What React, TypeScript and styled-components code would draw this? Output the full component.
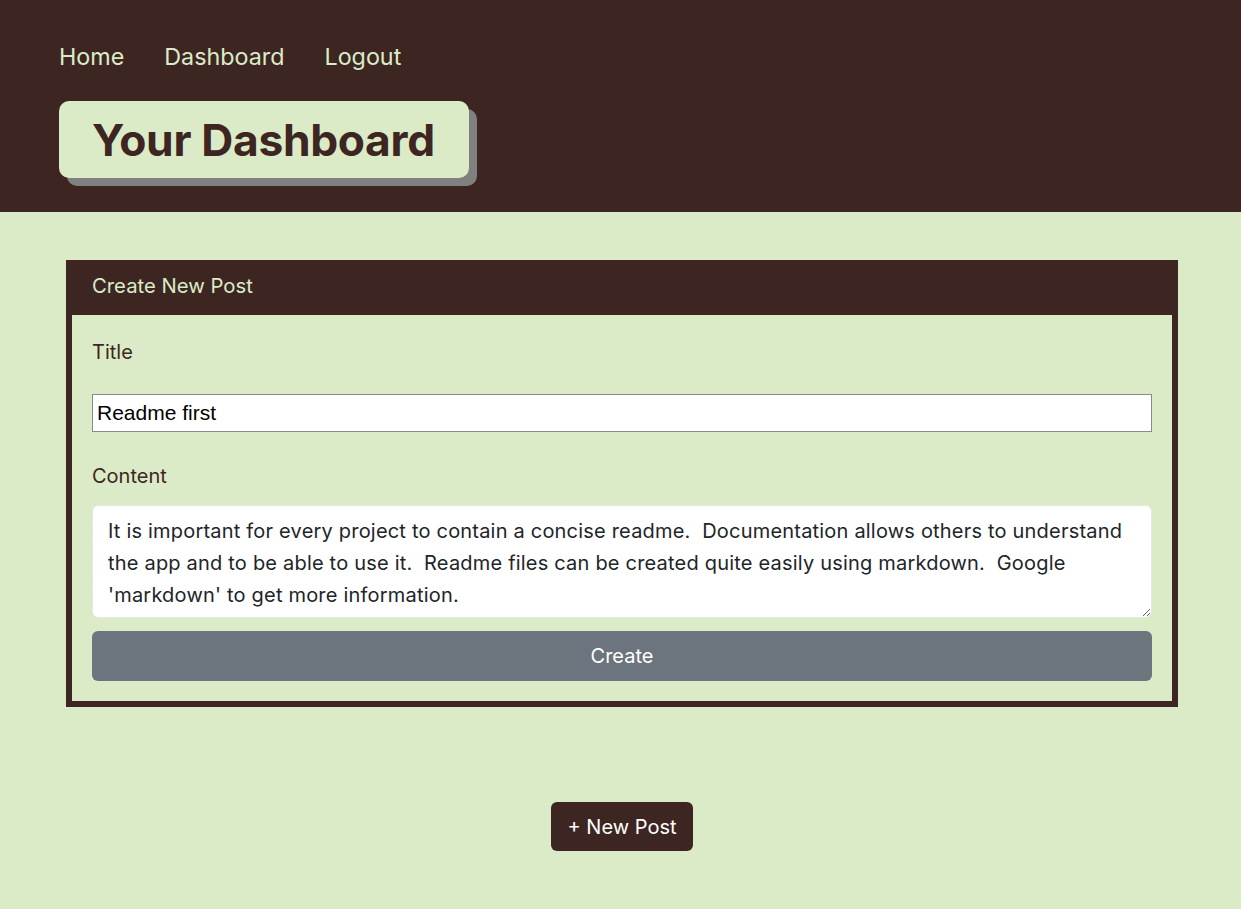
import React from "react";
import styled, { createGlobalStyle } from "styled-components";

const Global = createGlobalStyle`
  html, body { margin: 0; padding: 0; }
  body {
    background: #dcebc7;
    font-family: Inter, "Liberation Sans", sans-serif;
  }
  * { box-sizing: border-box; }
`;

const Header = styled.header`
  background: #3d2622;
  height: 212px;
  padding: 40px 59px 0;
  display: flex;
  flex-direction: column;
  align-items: flex-start;
`;

const Nav = styled.nav`
  display: flex;
  gap: 40px;
  height: 34px;
  align-items: center;
`;

const NavLink = styled.a`
  color: #dcebc7;
  font-size: 23.3px;
  text-decoration: none;
  line-height: 34px;
`;

const TitleBox = styled.div`
  margin-top: 27px;
  background: #dcebc7;
  border-radius: 10px;
  box-shadow: 8px 8px 0 #808080;
  padding: 0 34px 0 33px;
  height: 77px;
  display: flex;
  align-items: center;
`;

const Title = styled.h1`
  margin: 0;
  font-size: 44.3px;
  font-weight: 700;
  color: #3d2622;
  letter-spacing: -0.3px;
`;

const Main = styled.main`
  padding: 48px 63px 0 66px;
  display: flex;
  flex-direction: column;
  align-items: center;
`;

const Card = styled.section`
  width: 1112px;
  border: 6px solid #3d2622;
  border-top: 0;
  background: #dcebc7;
`;

const CardHeader = styled.div`
  background: #3d2622;
  height: 55px;
  padding: 0 20px 4px;
  display: flex;
  align-items: center;
  color: #dcebc7;
  font-size: 20.3px;
`;

const CardBody = styled.form`
  padding: 22px 20px 20px;
  display: flex;
  flex-direction: column;
`;

const Label = styled.label`
  color: #3d2622;
  font-size: 20px;
  line-height: 30px;
  margin-bottom: 27px;
`;

const Field = styled.input`
  height: 38px;
  width: 100%;
  border: 1px solid #8a8a8a;
  background: #fff;
  font-family: "Liberation Sans", Arial, sans-serif;
  font-size: 21px;
  padding: 0 4px;
  color: #000;
  margin-bottom: 29px;
`;

const ContentLabel = styled(Label)`
  margin-bottom: 14px;
`;

const Area = styled.textarea`
  height: 113px;
  width: 100%;
  border: 1px solid #e4e7ea;
  border-radius: 6px;
  background: #fff;
  font-family: Inter, "Liberation Sans", sans-serif;
  font-size: 20px;
  letter-spacing: 0.2px;
  line-height: 32px;
  color: #212529;
  padding: 9px 15px;
  resize: vertical;
  margin: 0 0 13px;
`;

const CreateButton = styled.button`
  height: 50px;
  border: 0;
  border-radius: 6px;
  background: #6c757d;
  color: #fff;
  font-family: Inter, "Liberation Sans", sans-serif;
  font-size: 20px;
`;

const NewPost = styled.button`
  margin-top: 95px;
  height: 49px;
  padding: 0 17px;
  border: 0;
  border-radius: 6px;
  background: #3d2622;
  color: #fff;
  font-family: Inter, "Liberation Sans", sans-serif;
  font-size: 20px;
`;

export default function App() {
  return (
    <>
      <Global />
      <Header>
        <Nav>
          <NavLink href="#">Home</NavLink>
          <NavLink href="#">Dashboard</NavLink>
          <NavLink href="#">Logout</NavLink>
        </Nav>
        <TitleBox>
          <Title>Your Dashboard</Title>
        </TitleBox>
      </Header>
      <Main>
        <Card>
          <CardHeader>Create New Post</CardHeader>
          <CardBody onSubmit={(e) => e.preventDefault()}>
            <Label htmlFor="title">Title</Label>
            <Field id="title" defaultValue="Readme first" />
            <ContentLabel htmlFor="content">Content</ContentLabel>
            <Area
              id="content"
              defaultValue="It is important for every project to contain a concise readme.  Documentation allows others to understand the app and to be able to use it.  Readme files can be created quite easily using markdown.  Google 'markdown' to get more information."
            />
            <CreateButton type="submit">Create</CreateButton>
          </CardBody>
        </Card>
        <NewPost>+ New Post</NewPost>
      </Main>
    </>
  );
}
